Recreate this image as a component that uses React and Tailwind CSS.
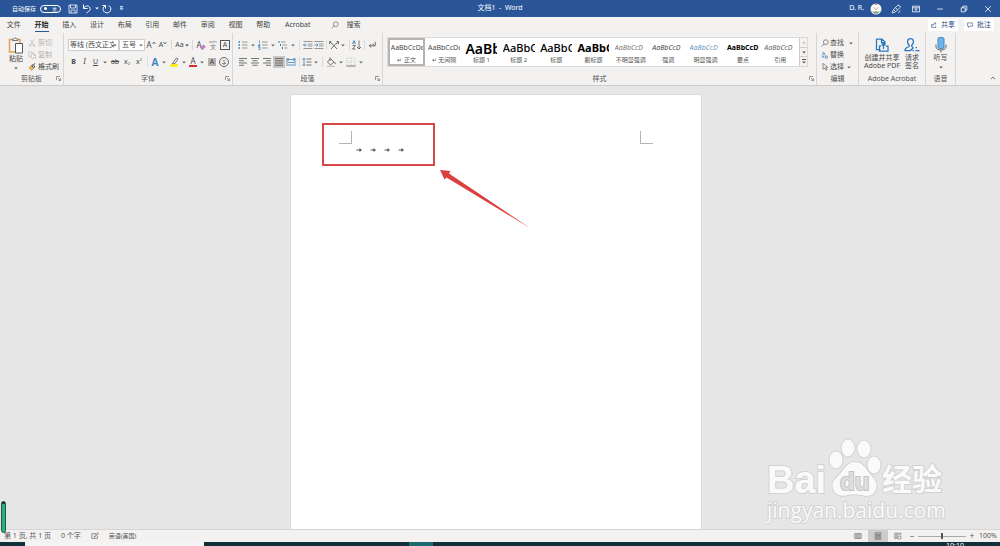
import React from 'react';

function Svg({ className = 'size-2.5', box = 20, children, ...rest }) {
  return (
    <svg viewBox={`0 0 ${box} ${box}`} className={`${className} shrink-0`} fill="none" stroke="currentColor" strokeWidth="1.5" aria-hidden="true" {...rest}>
      {children}
    </svg>
  );
}

const BLUE = '#2f78b8';

function Caret({ className = '' }) {
  return (
    <svg viewBox="0 0 6 4" className={`h-[3px] w-1 shrink-0 ${className}`} fill="currentColor" aria-hidden="true">
      <path d="M0.3 0.5h5.4L3 3.5z" />
    </svg>
  );
}

function Tool({ label, className = 'w-3', children, ...rest }) {
  return (
    <button type="button" aria-label={label} className={`flex h-3 shrink-0 items-center justify-center leading-3 ${className}`} {...rest}>
      {children}
    </button>
  );
}

function Drop({ label, className = 'w-2 text-[#666]' }) {
  return (
    <Tool label={label} className={className}>
      <Caret />
    </Tool>
  );
}

function Divider() {
  return <span className="mx-0.5 h-2.5 w-px shrink-0 bg-[#dcdad8]" />;
}

function Launcher() {
  return (
    <button type="button" aria-label="更多选项" className="absolute right-0.5 bottom-1 text-[#777]">
      <Svg className="size-[5px]" box={10}>
        <path d="M1 8V1h7M4 4l5 5M9 5v4H5" />
      </Svg>
    </button>
  );
}

function Group({ title, launcher, className = '', children }) {
  return (
    <section aria-label={title} className={`relative flex h-[52px] flex-col border-r border-[#d8d6d4] pt-1 ${className}`}>
      <div className="flex-1">{children}</div>
      <h2 className="pb-px text-center text-[7px] leading-[10px] text-[#555]">{title}</h2>
      {launcher && <Launcher />}
    </section>
  );
}

function Lines({ rows, x = 2 }) {
  return rows.map(([a, b], i) => <path key={i} d={`M${x + a} ${3 + i * 4.5}H${x + b}`} />);
}

function TitleBar() {
  return (
    <header className="flex h-[17px] items-center bg-[#2a5699] text-[7px] text-white">
      <div className="flex flex-1 items-center">
        <label htmlFor="autosave" className="ml-3 text-[6px] leading-4">自动保存</label>
        <span className="relative ml-1 flex h-2 w-[21px] items-center justify-between rounded-full border border-white px-[3px]">
          <input id="autosave" type="checkbox" role="switch" className="absolute inset-0 appearance-none" />
          <span className="size-[3px] rounded-full bg-white" />
          <span className="text-[5px] leading-[6px]">关</span>
        </span>
        <Tool label="保存" className="ml-1.5 w-3">
          <Svg><path d="M2 2h16v16H2zM5 2v6h10V2M6 18v-6h8v6" /></Svg>
        </Tool>
        <Tool label="撤消" className="ml-0.5 w-3">
          <Svg strokeWidth="2"><path d="M3 1v8h8M3 9c3-5 9-7 12-3s1 8-6 12" /></Svg>
        </Tool>
        <Drop label="撤消选项" className="w-2 text-white" />
        <Tool label="恢复" className="w-3">
          <Svg strokeWidth="2"><path d="M7 3C1 6 1 13 5 16s10 2 12-3-1-9-4-9M1 3h6v6" /></Svg>
        </Tool>
        <Tool label="自定义快速访问工具栏" className="ml-0.5 w-3">
          <Svg className="size-[5px]" box={10}><path d="M2 1h6M2 4h6L5 8z" /></Svg>
        </Tool>
      </div>
      <h1 className="text-[7px] whitespace-pre">文档1  -  Word</h1>
      <div className="flex flex-1 items-center justify-end">
        <span>D. R.</span>
        <Tool label="账户" className="ml-1.5 w-3">
          <svg viewBox="0 0 24 24" className="size-3" aria-hidden="true">
            <circle cx="12" cy="12" r="11" fill="#f3f1ec" />
            <path d="M7 9c0-7 10-7 10 0l2 8H5z" fill="#fff" />
            <path d="M9 4l3-3 3 3z" fill="#d96a4a" />
            <circle cx="9.500" cy="10" r="1.200" fill="#555" />
            <circle cx="14.500" cy="10" r="1.200" fill="#555" />
            <path d="M10 12h4l-2 3z" fill="#e09a3c" />
            <path d="M5 17h14l-3 4H8z" fill="#7f9c8c" />
          </svg>
        </Tool>
        <Tool label="墨迹" className="ml-2 w-3">
          <Svg><path d="M2 18l3-7 9-9 4 2v3l-9 9zM5 11l4 4M9 7l4 5M15 18l3-5" /></Svg>
        </Tool>
        <Tool label="功能区显示选项" className="ml-2 w-3">
          <Svg className="size-2"><path d="M1 3h18v14H1zM1 7h18M10 15V9M7 12l3-3 3 3" strokeWidth="2" /></Svg>
        </Tool>
        <Tool label="最小化" className="ml-3 w-3">
          <Svg className="size-2"><path d="M3 10h14" strokeWidth="2" /></Svg>
        </Tool>
        <Tool label="还原" className="ml-3 w-3">
          <Svg className="size-2"><path d="M3 7h10v10H3zM7 7V3h10v10h-4" strokeWidth="2" /></Svg>
        </Tool>
        <Tool label="关闭" className="mr-1.5 ml-3 w-3">
          <Svg className="size-2"><path d="M3 3l14 14M17 3L3 17" strokeWidth="2" /></Svg>
        </Tool>
      </div>
    </header>
  );
}

const tabs = ['文件', '开始', '插入', '设计', '布局', '引用', '邮件', '审阅', '视图', '帮助'];

function TabBar() {
  return (
    <div className="flex h-4 items-center text-[7px] text-[#444]">
      <nav className="flex flex-1 items-center">
        <div className="grid w-[277px] grid-cols-10">
          {tabs.map((tab) => (
            <a
              key={tab}
              href="#"
              className={tab === '开始' ? 'flex h-4 justify-center font-bold text-[#222]' : 'flex h-4 justify-center'}
            >
              <span className={tab === '开始' ? 'h-[15px] border-b border-[#2a5699] leading-4' : 'leading-4'}>{tab}</span>
            </a>
          ))}
        </div>
        <a href="#" className="ml-2 leading-4">Acrobat</a>
        <label htmlFor="search" className="ml-5 text-[#555]">
          <Svg className="size-2"><circle cx="12" cy="8" r="6" /><path d="M8 12l-6 6" /></Svg>
        </label>
        <input id="search" type="text" aria-label="搜索" placeholder="搜索" className="ml-2 h-4 w-20 bg-transparent leading-4 outline-none placeholder:text-[#444]" />
      </nav>
      <div className="flex gap-1.5 pr-1.5 text-[#2a4a80]">
        <button type="button" className="flex h-3 items-center gap-1 bg-white px-[3px] leading-3">
          <Svg className="size-1.5"><path d="M6 8H2v10h14v-5M6 13c0-5 3-8 9-8M12 1l5 4-5 4" strokeWidth="2" /></Svg>
          共享
        </button>
        <button type="button" className="flex h-3 items-center gap-1 bg-white px-[3px] leading-3">
          <Svg className="size-1.5"><path d="M2 3h16v11H9l-4 4v-4H2z" strokeWidth="2" /></Svg>
          批注
        </button>
      </div>
    </div>
  );
}

function ClipboardGroup() {
  return (
    <Group title="剪贴板" launcher className="w-16">
      <div className="flex gap-1 pl-2">
        <button type="button" className="flex flex-col items-center text-[7px] leading-[9px]">
          <svg viewBox="0 0 32 34" className="h-[17px] w-4" fill="none" strokeWidth="2" aria-hidden="true">
            <path d="M15 30H3V5h6M18 5h6v7" stroke="#e0a355" strokeWidth="3" />
            <path d="M9 7V4h3c0-3 5-3 5 0h3v3z" fill="#fff" stroke="#777" />
            <path d="M15 13h14v19H15z" fill="#fff" stroke="#555" />
          </svg>
          粘贴
          <Caret className="mt-1 text-[#666]" />
        </button>
        <div className="flex flex-col text-[7px]">
          <button type="button" disabled className="flex h-3 items-center gap-0.5 leading-3 text-[#b3b1af]">
            <Svg className="size-2"><path d="M5 1l8 13M15 1L7 14" /><circle cx="5" cy="16" r="2.500" /><circle cx="15" cy="16" r="2.500" /></Svg>
            剪切
          </button>
          <button type="button" disabled className="flex h-3 items-center gap-0.5 leading-3 text-[#b3b1af]">
            <Svg className="size-2"><path d="M7 14H2V2h8l2 3M8 6h7l4 4v8H8zM14 6v5h5" /></Svg>
            复制
          </button>
          <button type="button" className="flex h-3 items-center gap-0.5 leading-3">
            <Svg className="size-2"><path d="M2 12l6-5 6 6-5 6z" fill="#f0b45c" stroke="#c98a35" /><path d="M9 6l5 6 3-2-4-6zM14 4l4-3" strokeWidth="2.500" /></Svg>
            格式刷
          </button>
        </div>
      </div>
    </Group>
  );
}

function FontGroup() {
  return (
    <Group title="字体" launcher className="w-[169px]">
      <div className="flex h-4 items-center pl-1">
        <select aria-label="字体" className="h-3 w-[51px] appearance-none overflow-hidden border border-[#cfcdcb] bg-white pr-1 pl-px text-[7px] leading-[10px] text-clip whitespace-nowrap">
          <option>等线 (西文正文</option>
        </select>
        <Caret className="-ml-1.5 mr-0.5 text-[#666]" />
        <select aria-label="字号" className="h-3 w-[26px] appearance-none border border-[#cfcdcb] bg-white pl-0.5 text-[7px] leading-[10px]">
          <option>五号</option>
        </select>
        <Caret className="-ml-1.5 mr-0.5 text-[#666]" />
        <Tool label="增大字号" className="w-3 text-[8px]">A<Svg className="size-1 -mt-1" box={8}><path d="M1 6l3-4 3 4" /></Svg></Tool>
        <Tool label="减小字号" className="w-3 text-[7px]">A<Svg className="size-1 -mt-1" box={8}><path d="M1 2l3 4 3-4" /></Svg></Tool>
        <Divider />
        <Tool label="更改大小写" className="w-4 gap-px text-[7px]">Aa<Caret /></Tool>
        <Divider />
        <Tool label="清除所有格式" className="w-3 text-[8px]">
          A<Svg className="size-1.5 -ml-0.5 mt-1"><path d="M2 12L11 3l7 6-9 9H6z" fill="#c77dcf" stroke="#9b4fa5" /></Svg>
        </Tool>
        <Tool label="拼音指南" className="w-3 flex-col text-[#777]">
          <span className="text-[4px] leading-1">wén</span>
          <span className="text-[6px] leading-1.5">文</span>
        </Tool>
        <Tool label="字符边框">
          <span className="size-2.5 border border-[#555] text-[7px] leading-2">A</span>
        </Tool>
      </div>
      <div className="flex h-[18px] items-center pl-1">
        <Tool label="加粗" className="w-[11px] text-[7px] font-bold">B</Tool>
        <Tool label="倾斜" className="w-[11px] font-serif text-[8px] italic">I</Tool>
        <Tool label="下划线" className="w-[11px] text-[7px] underline">U</Tool>
        <Drop label="下划线样式" />
        <Tool label="删除线" className="w-3 text-[7px] line-through">ab</Tool>
        <Tool label="下标" className="w-3 text-[7px]">x<span className="mt-1 text-[4px]">2</span></Tool>
        <Tool label="上标" className="w-3 text-[7px]">x<span className="mb-1 text-[4px]">2</span></Tool>
        <Divider />
        <Tool label="文本效果" className="w-2.5 text-[10px] font-bold text-[#3b86c8]">A</Tool>
        <Drop label="文本效果选项" />
        <Tool label="突出显示" className="w-3">
          <Svg><path d="M8 11l7-9 3 2-6 9-5 1z" /><path d="M2 17h16" stroke="#ffec00" strokeWidth="5" /></Svg>
        </Tool>
        <Drop label="突出显示颜色" />
        <Tool label="字体颜色" className="w-2.5 flex-col">
          <span className="text-[8px] leading-2">A</span>
          <span className="h-0.5 w-2 bg-[#d62c2c]" />
        </Tool>
        <Drop label="选择字体颜色" />
        <Tool label="字符底纹">
          <span className="size-2 bg-[#b5b3b1] text-[7px] leading-2">A</span>
        </Tool>
        <Tool label="带圈字符">
          <span className="size-2.5 rounded-full border border-[#666] text-[5px] leading-2">字</span>
        </Tool>
      </div>
    </Group>
  );
}

function ParagraphGroup() {
  return (
    <Group title="段落" launcher className="w-[150px]">
      <div className="flex h-4 items-center pl-1">
        <Tool label="项目符号">
          <Svg><path d="M8 4h11M8 10h11M8 16h11" stroke="#777" /><path d="M1 4h3M1 10h3M1 16h3" stroke={BLUE} strokeWidth="3" /></Svg>
        </Tool>
        <Drop label="项目符号库" />
        <Tool label="编号">
          <Svg><path d="M8 4h11M8 10h11M8 16h11" stroke="#777" /><path d="M3 1v5M1 9h3v2H1v2h3M1 15h3v4H1" stroke={BLUE} /></Svg>
        </Tool>
        <Drop label="编号库" />
        <Tool label="多级列表">
          <Svg><path d="M6 4h9M9 10h9M13 16h6" stroke="#777" /><path d="M2 2v4M5 8v4M9 14v4" stroke={BLUE} strokeWidth="2" /></Svg>
        </Tool>
        <Drop label="列表库" />
        <Divider />
        <Tool label="减少缩进量" className="w-[11px]">
          <Svg><path d="M1 3h18M10 8h9M10 12h9M1 17h18" stroke="#777" /><path d="M8 10H1M4 7l-3 3 3 3" stroke={BLUE} /></Svg>
        </Tool>
        <Tool label="增加缩进量" className="w-[11px]">
          <Svg><path d="M1 3h18M10 8h9M10 12h9M1 17h18" stroke="#777" /><path d="M1 10h7M5 7l3 3-3 3" stroke={BLUE} /></Svg>
        </Tool>
        <Divider />
        <Tool label="中文版式" className="w-2.5">
          <Svg><path d="M4 18L15 6M16 18L5 6M1 8V3h4M19 8V3h-4M2 4l4 4M18 4l-4 4" /></Svg>
        </Tool>
        <Drop label="中文版式选项" />
        <Divider />
        <Tool label="排序" className="w-2.5">
          <Svg><path d="M1 8l3-7 3 7M2 6h4" stroke={BLUE} /><path d="M1 11h6l-6 7h6M14 1v17M10 14l4 4 4-4" /></Svg>
        </Tool>
        <Divider />
        <Tool label="显示编辑标记" className="w-2.5">
          <Svg className="size-2" strokeWidth="2"><path d="M18 2v10H4M8 8l-5 4 5 4M13 7v5" /></Svg>
        </Tool>
      </div>
      <div className="flex h-[18px] items-center pl-1">
        <Tool label="左对齐"><Svg><Lines rows={[[0, 16], [0, 10], [0, 16], [0, 10]]} /></Svg></Tool>
        <Tool label="居中"><Svg><Lines rows={[[0, 16], [3, 13], [0, 16], [3, 13]]} /></Svg></Tool>
        <Tool label="右对齐"><Svg><Lines rows={[[0, 16], [6, 16], [0, 16], [6, 16]]} /></Svg></Tool>
        <Tool label="两端对齐" className="w-3 bg-[#c8c6c4]"><Svg><Lines rows={[[0, 16], [0, 16], [0, 16], [0, 16]]} /></Svg></Tool>
        <Tool label="分散对齐">
          <Svg><path d="M2 2v16M18 2v16" stroke={BLUE} /><path d="M4 5h12M4 16h12M4 11h12" stroke={BLUE} /><path d="M5 2l-2 3 2 3M15 2l2 3-2 3" stroke={BLUE} /></Svg>
        </Tool>
        <Divider />
        <Tool label="行和段落间距" className="w-2.5">
          <Svg><path d="M9 4h10M9 10h10M9 16h10" /><path d="M4 2v16M1 5l3-3 3 3M1 15l3 3 3-3" stroke={BLUE} /></Svg>
        </Tool>
        <Drop label="间距选项" />
        <Divider />
        <Tool label="底纹" className="w-3">
          <Svg><path d="M9 3l7 7-7 6-6-6zM8 1v7M17 10l2 4" /><path d="M2 18.500h16" stroke="#bbb" strokeWidth="2" /></Svg>
        </Tool>
        <Drop label="底纹颜色" />
        <Tool label="边框">
          <Svg><path d="M2 2h16v15M2 2v15M10 2v15M2 10h16" stroke="#bbb" strokeDasharray="2 2" /><path d="M1 18h18" /></Svg>
        </Tool>
        <Drop label="边框选项" />
      </div>
    </Group>
  );
}

const styles = [
  { name: '正文', text: 'AaBbCcDd', look: 'text-[7px]', mark: true },
  { name: '无间隔', text: 'AaBbCcDd', look: 'text-[7px]', mark: true },
  { name: '标题 1', text: 'AaBb', look: 'text-[14px] font-semibold text-black' },
  { name: '标题 2', text: 'AaBbC', look: 'text-[11px] font-medium text-black' },
  { name: '标题', text: 'AaBbC', look: 'text-[11px] font-medium text-black' },
  { name: '副标题', text: 'AaBbC', look: 'text-[11px] font-bold text-black' },
  { name: '不明显强调', text: 'AaBbCcD', look: 'text-[7px] italic text-[#777]' },
  { name: '强调', text: 'AaBbCcD', look: 'text-[7px] italic' },
  { name: '明显强调', text: 'AaBbCcD', look: 'text-[7px] italic text-[#6f97c0]' },
  { name: '要点', text: 'AaBbCcD', look: 'text-[7px] font-bold text-black' },
  { name: '引用', text: 'AaBbCcD', look: 'text-[7px] italic text-[#666]' },
];

function StylesGroup() {
  return (
    <Group title="样式" launcher className="min-w-0 flex-1">
      <div className="mr-2 ml-1 flex h-[30px] border border-[#dddbd9] bg-white">
        <div className="grid min-w-0 flex-1 grid-cols-11">
          {styles.map((s) => (
            <button
              key={s.name}
              type="button"
              className={
                s.name === '正文'
                  ? 'flex min-w-0 flex-col items-center border-2 border-[#b5b3b1]'
                  : 'flex min-w-0 flex-col items-center border-2 border-transparent'
              }
            >
              <span className={`flex h-4 w-8 items-center overflow-hidden whitespace-nowrap ${s.look}`}>{s.text}</span>
              <span className="text-[6px] leading-2 whitespace-nowrap text-[#555]">{s.mark ? '↵ ' : ''}{s.name}</span>
            </button>
          ))}
        </div>
        <div className="flex w-2 flex-col divide-y divide-[#cfcdcb] border-l border-[#cfcdcb] bg-[#f3f2f1] text-[#555]">
          <button type="button" aria-label="上一行" className="flex flex-1 items-center justify-center text-[#bbb]"><Caret className="rotate-180" /></button>
          <button type="button" aria-label="下一行" className="flex flex-1 items-center justify-center"><Caret /></button>
          <button type="button" aria-label="更多样式" className="flex flex-1 flex-col items-center justify-center gap-px"><span className="h-px w-1 bg-[#555]" /><Caret /></button>
        </div>
      </div>
    </Group>
  );
}

function EditingGroup() {
  return (
    <Group title="编辑" className="w-[42px]">
      <div className="flex flex-col pl-1 text-[7px]">
        <button type="button" className="flex h-3 items-center gap-px leading-3">
          <Svg className="size-2"><circle cx="12" cy="8" r="6" /><path d="M8 12l-7 7" /></Svg>
          查找<Caret className="ml-1 text-[#666]" />
        </button>
        <button type="button" className="flex h-3 items-center gap-px leading-3">
          <Svg className="size-2" stroke={BLUE}><path d="M5 2v7h4V5H5M11 10v8h5v-5h-5M3 10v5h5M6 13l2 2-2 2" /></Svg>
          替换
        </button>
        <button type="button" className="flex h-3 items-center gap-px leading-3">
          <Svg className="size-2"><path d="M5 1v15l4-4 3 6 3-1-3-6h5z" /></Svg>
          选择<Caret className="ml-0.5 text-[#666]" />
        </button>
      </div>
    </Group>
  );
}

function AcrobatGroup() {
  return (
    <Group title="Adobe Acrobat" className="w-[67px]">
      <div className="flex justify-center gap-1 text-[7px] leading-2">
        <button type="button" className="flex flex-col items-center whitespace-nowrap">
          <svg viewBox="0 0 28 30" className="mb-px h-4 w-3.5" fill="none" stroke="#2a76c0" strokeWidth="2.500" aria-hidden="true">
            <path d="M11 24H3V3h11l6 6v4M13 3v7h7M12 17H9v10h17V17h-4M17 23V13M13 16l4-4 4 4" />
          </svg>
          <span>创建并共享</span>
          <span>Adobe PDF</span>
        </button>
        <button type="button" className="flex flex-col items-center whitespace-nowrap">
          <svg viewBox="0 0 32 30" className="mb-px h-4 w-4" fill="none" stroke="#2a76c0" strokeWidth="2.500" aria-hidden="true">
            <path d="M11 16C5 12 6 2 13 2s8 10 2 14c0 2 2 3 3 4M11 16c0 4-9 2-9 10h11l6-6M17 26h3M23 26h8M23 20h3" />
          </svg>
          <span>请求</span>
          <span>签名</span>
        </button>
      </div>
    </Group>
  );
}

function VoiceGroup() {
  return (
    <Group title="语音" className="w-[30px]">
      <button type="button" className="flex w-full flex-col items-center text-[7px] leading-2">
        <svg viewBox="0 0 24 32" className="mb-px h-4 w-3" fill="none" strokeWidth="2" aria-hidden="true">
          <rect x="6" y="1" width="12" height="22" rx="3" fill="#6db4e8" stroke="#3f87c4" />
          <path d="M2 15v5c0 8 20 8 20 0v-5M12 26v5" stroke="#666" />
        </svg>
        听写
        <Caret className="mt-1 text-[#666]" />
      </button>
    </Group>
  );
}

function Page() {
  return (
    <article className="relative flex w-[412px] max-w-full flex-col border-x border-t border-[#dcdcdc] bg-white">
      <div className="flex justify-between px-12 pt-9">
        <span className="size-[13px] border-r border-b border-[#b5b5b5]" />
        <span className="size-[13px] border-b border-l border-[#b5b5b5]" />
      </div>
      <p className="flex gap-1.5 pt-0.5 pl-16 text-[#555]">
        {[0, 1, 2, 3].map((n) => (
          <svg key={n} viewBox="0 0 16 16" className="size-2" aria-label="制表符" fill="none" stroke="currentColor" strokeWidth="2">
            <path d="M3 8h8" />
            <path d="M9 4l5 4-5 4z" fill="currentColor" stroke="none" />
          </svg>
        ))}
      </p>
      <div className="absolute top-7 left-[31px] h-[43px] w-[113px] border-2 border-[#d84848]" />
      <svg viewBox="0 0 92 60" className="absolute top-[74px] left-[148px] h-[60px] w-[92px]" aria-hidden="true">
        <path d="M1 1L11.500 2L10 4.500L91 59L7.500 8.500L5.500 10.500z" fill="#dd3f3f" />
      </svg>
    </article>
  );
}

function Watermark() {
  return (
    <svg
      viewBox="0 0 184 92"
      className="absolute right-[50px] bottom-[3px] h-[92px] w-[184px]"
      fill="#fafafa"
      stroke="#d2d2d2"
      strokeWidth="2"
      paintOrder="stroke"
      role="img"
      aria-label="Baidu 经验"
    >
      <text x="1" y="59" fontFamily="Liberation Sans, sans-serif" fontWeight="700" fontSize="38">Bai</text>
      <ellipse cx="70" cy="26" rx="6.500" ry="8.500" />
      <ellipse cx="82" cy="14" rx="6.500" ry="8.500" />
      <ellipse cx="98" cy="15" rx="6.500" ry="8.500" />
      <ellipse cx="108" cy="31" rx="6.500" ry="8.500" />
      <path d="M89 28c8 0 11 7 15 12 5 6 8 9 6 15-2 7-9 8-14 6-5-1-9-1-14 0-6 2-13 0-15-6-2-7 2-10 6-14 5-5 8-13 16-13z" />
      <text x="74" y="56" fontFamily="Liberation Sans, sans-serif" fontWeight="700" fontSize="24" fill="#dedede" stroke="#c4c4c4">du</text>
      <text x="116" y="56" fontFamily="Noto Sans CJK SC, sans-serif" fontWeight="700" fontSize="30">经验</text>
      <text x="1" y="84" fontFamily="Open Sans, sans-serif" fontSize="21">jingyan.baidu.com</text>
    </svg>
  );
}

function StatusBar() {
  return (
    <footer className="flex h-3 items-center bg-[#f3f2f1] pl-1 text-[7px] leading-3 text-[#555]">
      <div className="flex flex-1 items-center">
        <span>第 1 页, 共 1 页</span>
        <span className="ml-2.5">0 个字</span>
        <Tool label="校对" className="ml-2 w-3"><Svg className="size-2"><path d="M2 4h11M2 4v12h14v-6M8 13l1-4 8-7 2 2-8 7z" /></Svg></Tool>
        <span className="ml-2 text-[6px]">英语(美国)</span>
      </div>
      <div className="flex items-center">
        <Tool label="阅读视图" className="w-5"><Svg className="size-2"><path d="M10 4v13M10 4H2v12h16V4zM4 7h4M4 10h4M4 13h4M12 7h4M12 10h4M12 13h4" /></Svg></Tool>
        <Tool label="页面视图" className="w-5 bg-[#cfcdcb]"><Svg className="size-2"><path d="M3 2h14v16H3zM5 6h10M5 9h10M5 12h10M5 15h10" /></Svg></Tool>
        <Tool label="Web 版式视图" className="w-5"><Svg className="size-2"><path d="M2 3h15v5M2 3v13h7M4 7h9M4 10h5M4 13h5" /><circle cx="14" cy="14" r="4" /></Svg></Tool>
        <Tool label="缩小" className="w-2 text-[8px]">−</Tool>
        <input
          type="range"
          aria-label="缩放"
          defaultValue="50"
          className="mx-0.5 h-2 w-12 appearance-none bg-transparent [&::-webkit-slider-runnable-track]:h-px [&::-webkit-slider-runnable-track]:bg-[#aaa] [&::-webkit-slider-thumb]:-mt-[3px] [&::-webkit-slider-thumb]:h-1.5 [&::-webkit-slider-thumb]:w-0.5 [&::-webkit-slider-thumb]:appearance-none [&::-webkit-slider-thumb]:bg-[#555]"
        />
        <Tool label="放大" className="w-2 text-[8px]">+</Tool>
        <span className="w-6 text-center">100%</span>
      </div>
    </footer>
  );
}

export default function App() {
  return (
    <div className="relative flex min-h-screen flex-col bg-[#f3f2f1] font-['Noto_Sans','Noto_Sans_CJK_SC',sans-serif] text-[#4a4948]">
      <TitleBar />
      <TabBar />
      <div className="relative flex border-b border-[#cfcdcb]">
        <ClipboardGroup />
        <FontGroup />
        <ParagraphGroup />
        <StylesGroup />
        <EditingGroup />
        <AcrobatGroup />
        <VoiceGroup />
        <div className="flex w-11 items-end justify-end pr-1 pb-1">
          <button type="button" aria-label="折叠功能区"><Svg className="size-1.5"><path d="M3 14l7-7 7 7" strokeWidth="2.500" /></Svg></button>
        </div>
      </div>
      <main className="relative flex flex-1 justify-center border-b border-[#d5d5d5] bg-[#e6e6e6] pt-2 pr-2">
        <Page />
        <Watermark />
        <div className="absolute -bottom-1 left-px z-10 h-8 w-[5px] rounded-sm border border-[#1d5c50] bg-[#2fae78]">
          <div className="h-0.5 bg-[#17343a]" />
        </div>
      </main>
      <StatusBar />
      <div className="flex h-1 overflow-hidden bg-[#12303a]">
        <span className="w-[25px]" />
        <span className="w-[179px] bg-[#f4f4f4]" />
        <span className="ml-[205px] w-6 bg-[#1b6a70]" />
        <time className="ml-auto pr-9 text-[7px] leading-2 text-white">10:10</time>
      </div>
    </div>
  );
}
